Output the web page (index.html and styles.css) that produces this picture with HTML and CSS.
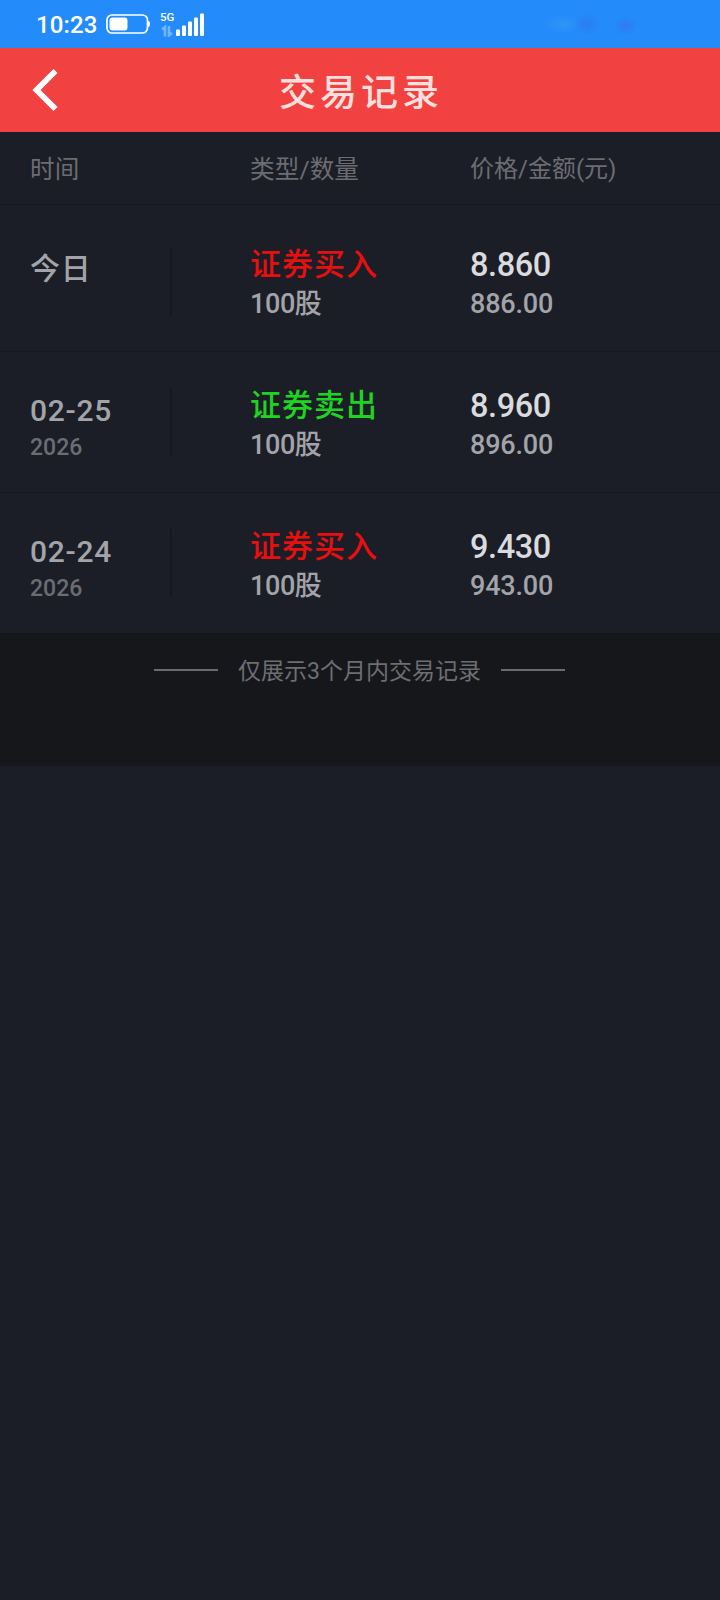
FILE: index.html
```html
<!DOCTYPE html>
<html lang="zh-CN">
<head>
<meta charset="utf-8">
<title>交易记录</title>
<link rel="stylesheet" href="styles.css">
</head>
<body>
<div class="status">
  <span class="clock">10:23</span>
  <svg class="battery" width="44" height="20" viewBox="0 0 44 20"><rect x="1" y="1" width="40.5" height="18" rx="5" fill="none" stroke="#fff" stroke-width="1.7"/><rect x="3.5" y="3.5" width="18" height="13" rx="3" fill="#fff"/><path d="M42 7q2 0 2 3t-2 3z" fill="#fff"/></svg>
  <div class="signal">
    <div class="net"><span>5G</span><svg width="12" height="12" viewBox="0 0 12 12" fill="none" stroke="#6fb5ff" stroke-width="2.6"><path d="M1 4.500L4 2V11.500M11 8L8 10.500V1"/></svg></div>
    <svg class="bars" width="29" height="24" viewBox="0 0 29 24" fill="#fff"><rect x="0" y="16.500" width="4" height="6.500" rx="1"/><rect x="6" y="12.500" width="4" height="10.500" rx="1"/><rect x="12" y="8.500" width="4" height="14.500" rx="1"/><rect x="18" y="4.500" width="4" height="18.500" rx="1"/><rect x="24" y="0.500" width="4" height="22.500" rx="1"/></svg>
  </div>
  <div class="smudge"></div>
</div>
<header class="nav">
  <svg class="back" width="26" height="44" viewBox="0 0 26 44"><path d="M23.500 3L4.500 22L23.500 41" fill="none" stroke="#fff" stroke-width="5.800"/></svg>
  <h1>交易记录</h1>
</header>
<main>
  <div class="grid heads"><span class="wide">时间</span><span class="wide">类型/数量</span><span>价格/金额(元)</span></div>
  <div class="grid row first">
    <div class="date"><b class="today">今日</b></div>
    <div><div class="type buy">证券买入</div><div class="qty">100股</div></div>
    <div><div class="price">8.860</div><div class="amount">886.00</div></div>
  </div>
  <div class="grid row">
    <div class="date"><b>02-25</b><small>2026</small></div>
    <div><div class="type sell">证券卖出</div><div class="qty">100股</div></div>
    <div><div class="price">8.960</div><div class="amount">896.00</div></div>
  </div>
  <div class="grid row">
    <div class="date"><b>02-24</b><small>2026</small></div>
    <div><div class="type buy">证券买入</div><div class="qty">100股</div></div>
    <div><div class="price">9.430</div><div class="amount">943.00</div></div>
  </div>
</main>
<footer class="note"><i></i><span>仅展示3个月内交易记录</span><i></i></footer>
</body>
</html>
```
FILE: styles.css
```css
* { box-sizing: border-box; }
body {
  margin: 0;
  min-height: 1600px;
  background: #1b1e26;
  font-family: Roboto, "Noto Sans CJK SC", sans-serif;
}
.status {
  display: flex;
  height: 48px;
  padding-left: 36px;
  background: #248bfa;
  color: #fff;
}
.clock {
  width: 70px;
  font-size: 24px;
  font-weight: 500;
  letter-spacing: .15px;
  line-height: 50px;
}
.battery { margin-top: 14px; }
.signal { display: flex; margin: 12px 0 0 10px; }
.net { width: 16px; font-size: 11.5px; font-weight: 500; line-height: 11px; }
.net svg { display: block; margin: 2px 0 0 1px; }
.bars { margin-top: 1px; }
.smudge {
  width: 96px;
  height: 30px;
  margin: 9px 80px 0 auto;
  background:
    radial-gradient(ellipse 14px 12px at 45% 50%, #2a7eef, transparent),
    radial-gradient(ellipse 12px 10px at 85% 55%, #2e7bf0, transparent),
    radial-gradient(ellipse 18px 10px at 20% 50%, #2c96f3, transparent);
}
.nav {
  display: grid;
  grid-template-columns: 80px 1fr 80px;
  height: 84px;
  background: #f24141;
}
.back { margin: 20px 0 0 32px; }
.nav h1 {
  margin: 0;
  padding-left: 2px;
  color: #ffe0dc;
  font-size: 37px;
  font-weight: 500;
  letter-spacing: 4px;
  line-height: 92px;
  height: 84px;
  text-align: center;
}
.grid {
  display: grid;
  grid-template-columns: 220px 220px 1fr;
  padding-left: 30px;
  border-bottom: 1px solid #15181e;
}
.heads {
  height: 73px;
  color: #6c6d73;
  font-size: 24px;
  line-height: 75px;
}
.heads .wide { font-size: 24.6px; line-height: 76px; letter-spacing: .1px; }
.row { height: 141px; padding-top: 37px; }
.row:last-child { height: 140px; border-bottom: 0; }
.row > .date {
  width: 142px;
  height: 68px;
  margin-top: -1px;
  padding-top: 6px;
  border-right: 2px solid #15181e;
}
.first { height: 147px; padding-top: 43px; }
.first > .date { margin-top: 0; padding-top: 4px; }
.date b, .date small { display: block; }
.date b {
  color: #a3a4a9;
  font-size: 30px;
  font-weight: 500;
  letter-spacing: .7px;
  line-height: 34px;
}
.date small { color: #6c6d74; font-size: 23px; font-weight: 500; line-height: 40px; }
.type { font-size: 31px; font-weight: 500; letter-spacing: 1px; line-height: 34px; }
.buy { color: #e80f0f; }
.sell { color: #1fd321; }
.qty, .amount {
  color: #a3a4a9;
  font-size: 27px;
  font-weight: 500;
  letter-spacing: -.2px;
  line-height: 45px;
}
.qty { letter-spacing: -.4px; }
.price { color: #dadbde; font-size: 32.5px; font-weight: 500; letter-spacing: -.4px; line-height: 34px; }
.note {
  display: flex;
  justify-content: center;
  gap: 20px;
  height: 133px;
  padding-right: 1px;
  background: #16171b;
  color: #6d6e72;
  font-size: 23px;
  line-height: 78px;
}
.note i { width: 64px; height: 2px; margin-top: 36px; background: #6a6b6f; }
```
